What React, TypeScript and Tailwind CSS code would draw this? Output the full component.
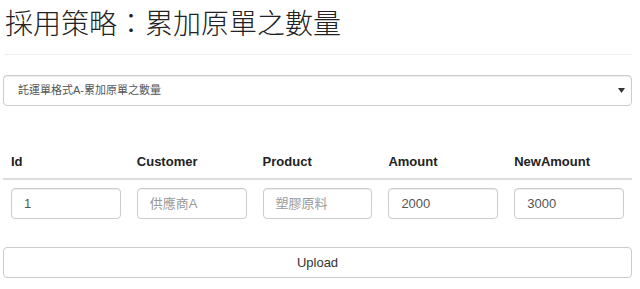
import React from "react";

const cols = ["Id", "Customer", "Product", "Amount", "NewAmount"];
const vals: { v: string; ph: boolean }[] = [
  { v: "1", ph: false },
  { v: "供應商A", ph: true },
  { v: "塑膠原料", ph: true },
  { v: "2000", ph: false },
  { v: "3000", ph: false },
];

export default function App() {
  return (
    <div
      className="w-[640px] h-[289px] bg-white overflow-hidden pl-[3px] pr-[8px]"
      style={{ fontFamily: '"Liberation Sans", Arial, "Noto Sans CJK TC", sans-serif' }}
    >
      <h1
        className="pt-[5px] pl-[2px] text-[28px] leading-[34px] text-[#222] font-light"
        style={{ fontFamily: '"Noto Sans CJK TC", "Noto Sans CJK SC", sans-serif' }}
      >
        採用策略：累加原單之數量
      </h1>
      <div className="mt-[15px] ml-[1px] border-t border-[#eee]" />
      <div className="mt-[20px] h-[31px] border border-[#ccc] rounded-[4px] flex items-center justify-between pl-[14px] pr-[6px] shadow-[inset_0_1px_1px_rgba(0,0,0,0.075)]">
        <span className="text-[11px] text-[#555]">託運單格式A-累加原單之數量</span>
        <svg width="7" height="5" viewBox="0 0 7 5">
          <path d="M0 0 L7 0 L3.5 5 Z" fill="#333" />
        </svg>
      </div>
      <div className="mt-[47px] grid grid-cols-5 border-b-2 border-[#ddd] pb-[7px]">
        {cols.map((c) => (
          <div key={c} className="px-[8px] text-[13px] font-bold text-[#222] leading-[18px]">
            {c}
          </div>
        ))}
      </div>
      <div className="grid grid-cols-5 pt-[8px]">
        {vals.map((x, i) => (
          <div key={i} className="px-[8px]">
            <div
              className={
                "h-[31px] border border-[#ccc] rounded-[4px] flex items-center pl-[12px] text-[13px] shadow-[inset_0_1px_1px_rgba(0,0,0,0.075)] " +
                (x.ph ? "text-[#999]" : "text-[#555]")
              }
            >
              {x.v}
            </div>
          </div>
        ))}
      </div>
      <button className="mt-[28px] w-full h-[31px] border border-[#ccc] rounded-[4px] bg-white text-[13px] text-[#333] flex items-center justify-center">
        Upload
      </button>
    </div>
  );
}
